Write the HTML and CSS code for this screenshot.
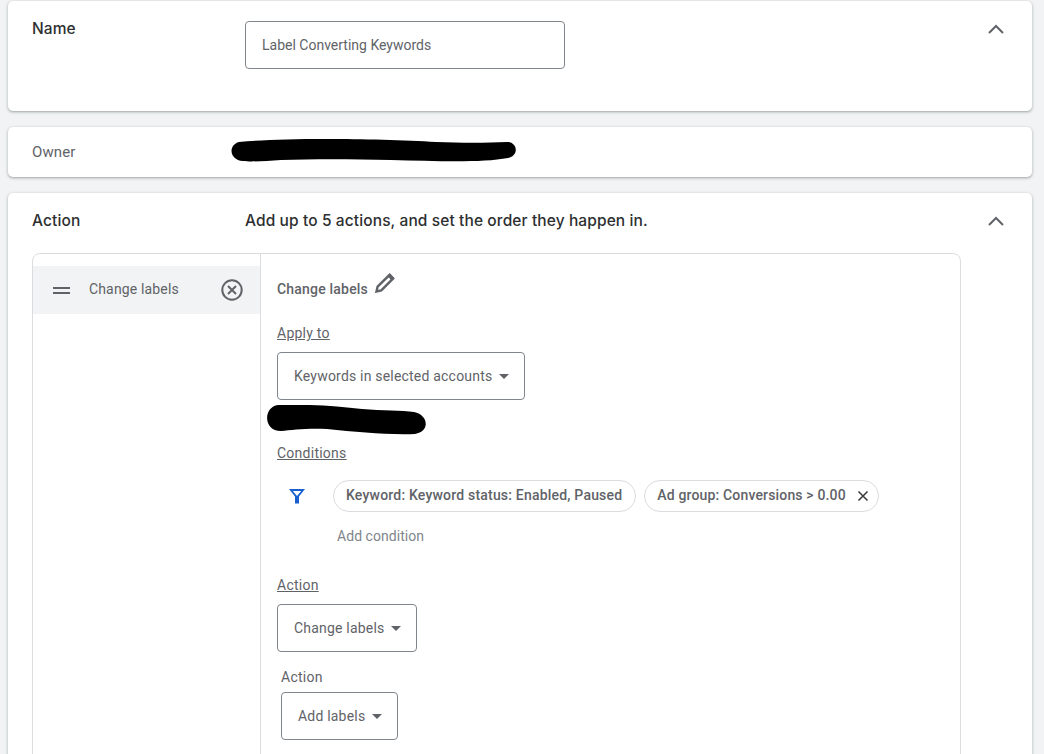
FILE: index.html
```html
<!DOCTYPE html>
<html lang="en">
<head>
<meta charset="utf-8">
<title>Label Converting Keywords</title>
<link rel="stylesheet" href="styles.css">
</head>
<body>
<main class="page">
  <section class="card card-name">
    <h2 class="card-title">Name</h2>
    <div class="card-value"><div class="field">Label Converting Keywords</div></div>
    <svg class="chevron" viewBox="0 0 16 10"><path d="M1 9 L8 2 L15 9" /></svg>
  </section>
  <section class="card card-owner">
    <div class="owner-label">Owner</div>
    <svg class="scribble scribble-owner" viewBox="0 0 286 24"><path d="M8 3 C30 1 60 0 95 0 C130 0 175 1 205 3 C230 4 255 4 276 3 C287 3 288 17 277 19 C250 24 205 22 160 21 C120 20 80 20 50 21 C35 22 20 23 12 22 C-2 21 -3 6 8 3 Z" /></svg>
  </section>
  <section class="card card-action">
    <div class="action-head">
      <h2 class="card-title">Action</h2>
      <div class="action-hint">Add up to 5 actions, and set the order they happen in.</div>
      <svg class="chevron" viewBox="0 0 16 10"><path d="M1 9 L8 2 L15 9" /></svg>
    </div>
    <div class="builder">
      <aside class="steps">
        <div class="step">
          <span class="drag"></span>
          <span class="step-name">Change labels</span>
          <svg class="step-remove" viewBox="0 0 22 22"><circle cx="11" cy="11" r="9.7" /><path d="M7 7 L15 15 M15 7 L7 15" /></svg>
        </div>
      </aside>
      <div class="detail">
        <div class="detail-title">
          <span>Change labels</span>
          <svg class="pencil" viewBox="0 0 20 20"><path class="pencil-line" d="M1.5 18.5 L2.6 13.6 L14.6 1.8 L18.2 5.4 L6.3 17.3 Z" /><path class="pencil-fill" d="M12.8 3.6 L15.2 0.8 L19.2 5 L16.4 7.2 Z" /></svg>
        </div>
        <div class="sub-label apply-label">Apply to</div>
        <div class="select select-apply">Keywords in selected accounts<i class="caret"></i></div>
        <svg class="scribble scribble-acct" viewBox="0 0 160 30" preserveAspectRatio="none"><path d="M11 0 C40 -1 70 1 95 4 C115 6 135 5 147 7 C162 10 163 27 148 29 C120 30 90 27 60 24 C40 23 25 25 14 26 C-4 26 -4 2 11 0 Z" /></svg>
        <div class="sub-label cond-label">Conditions</div>
        <div class="cond-row">
          <svg class="filter" viewBox="0 0 16 16"><path d="M0 1 H16 L10 8.6 V15.5 H6 V8.6 Z M3.8 3 L8 8 L12.2 3 Z" fill-rule="evenodd" /></svg>
          <div class="chips">
            <span class="chip chip-status">Keyword: Keyword status: Enabled, Paused</span>
            <span class="chip chip-conv">Ad group: Conversions &gt; 0.00<svg class="chip-x" viewBox="0 0 12 12"><path d="M1.5 1.5 L10.5 10.5 M10.5 1.5 L1.5 10.5" /></svg></span>
          </div>
        </div>
        <div class="add-cond">Add condition</div>
        <div class="sub-label act-label">Action</div>
        <div class="select select-change">Change labels<i class="caret"></i></div>
        <div class="nested">
          <div class="nested-label">Action</div>
          <div class="select select-add">Add labels<i class="caret"></i></div>
        </div>
      </div>
    </div>
  </section>
</main>
</body>
</html>
```
FILE: styles.css
```css
* { box-sizing: border-box; }
html, body { margin: 0; height: 754px; overflow: hidden; }
body { background: #f1f3f4; font-family: Roboto, "Liberation Sans", sans-serif; font-size: 14px; color: #5f6368; }
.page { height: 754px; overflow: hidden; padding: 1px 12px 0 8px; display: flex; flex-direction: column; gap: 16px; }
.card { position: relative; flex: none; background: #fff; border-radius: 5px; box-shadow: 0 1px 2px rgba(60,64,67,.3), 0 1px 3px 1px rgba(60,64,67,.12); }
.card-title { margin: 0; width: 213px; flex: none; font-family: Inter, Roboto, sans-serif; font-weight: 500; font-size: 15.5px; letter-spacing: .11px; line-height: 20px; color: #2d2f31; }
.chevron { position: absolute; right: 28px; width: 16px; height: 10px; fill: none; stroke: #5f6368; stroke-width: 2; }
.card-name { height: 110px; padding: 18px 24px 0; display: flex; }
.card-name .chevron { top: 23px; }
.card-value { padding-top: 2px; }
.field { width: 320px; height: 48px; padding-left: 16px; display: flex; align-items: center; border: 1px solid #80868b; border-radius: 4px; }
.card-owner { height: 50px; padding: 0 24px; display: flex; align-items: center; }
.owner-label { font-size: 15px; letter-spacing: .1px; }
.scribble { position: absolute; fill: #000; }
.scribble-owner { left: 223px; top: 12px; width: 286px; height: 24px; }
.card-action { height: 600px; padding: 18px 24px 0; }
.action-head { display: flex; height: 42px; }
.action-head .chevron { top: 23px; }
.action-hint { font-family: Inter, Roboto, sans-serif; font-size: 15.5px; letter-spacing: .11px; line-height: 20px; font-weight: 500; color: #2d2f31; }
.builder { display: flex; width: 929px; height: 540px; border: 1px solid #dadce0; border-radius: 8px; }
.steps { width: 228px; padding-top: 12px; border-right: 1px solid #dadce0; flex: none; }
.step { height: 48px; display: flex; align-items: center; padding-left: 20px; background: #f1f3f4; }
.drag { width: 17px; height: 7px; border-top: 2px solid #5f6368; border-bottom: 2px solid #5f6368; flex: none; }
.step-name { margin-left: 19px; width: 132px; padding-bottom: 2px; letter-spacing: .15px; }
.step-remove { width: 22px; height: 22px; flex: none; fill: none; stroke: #5f6368; stroke-width: 2; }
.detail { position: relative; padding: 19px 0 0 16px; flex: 1; }
.detail-title { display: flex; align-items: flex-end; height: 27px; font-weight: 500; letter-spacing: .2px; }
.detail-title span { line-height: 22px; }
.pencil { align-self: flex-start; width: 20px; height: 20px; margin-left: 7px; }
.pencil-line { fill: none; stroke: #5f6368; stroke-width: 2.4; }
.pencil-fill { fill: #5f6368; }
.sub-label { line-height: 18px; letter-spacing: .25px; text-decoration: underline; }
.apply-label { margin-top: 24px; }
.select { height: 48px; padding-left: 16px; display: flex; align-items: center; border: 1px solid #80868b; border-radius: 4px; letter-spacing: .2px; }
.select-apply { width: 248px; margin-top: 10px; }
.caret { margin-left: 7px; width: 0; height: 0; border-left: 5px solid transparent; border-right: 5px solid transparent; border-top: 5px solid #5f6368; }
.scribble-acct { left: 6px; top: 151px; width: 160px; height: 30px; }
.cond-label { margin-top: 44px; }
.cond-row { display: flex; align-items: center; margin-top: 18px; padding-left: 12px; }
.filter { width: 16px; height: 16px; fill: #1a5fd0; flex: none; }
.chips { display: flex; gap: 8px; margin-left: 28px; }
.chip { display: flex; align-items: center; height: 32px; padding: 0 13px 2px 12px; border: 1px solid #dadce0; border-radius: 16px; font-weight: 500; letter-spacing: .2px; white-space: nowrap; }
.chip-conv { padding-right: 9px; letter-spacing: .16px; }
.chip-x { width: 12px; height: 12px; margin: 2px 0 0 11px; fill: none; stroke: #3c4043; stroke-width: 1.6; }
.add-cond { margin: 15px 0 0 60px; line-height: 18px; color: #80868b; letter-spacing: .05px; }
.act-label { margin-top: 31px; }
.select-change { width: 140px; margin-top: 10px; }
.nested { padding: 16px 0 0 4px; }
.nested-label { line-height: 18px; letter-spacing: .25px; }
.select-add { width: 117px; margin-top: 6px; }
```
